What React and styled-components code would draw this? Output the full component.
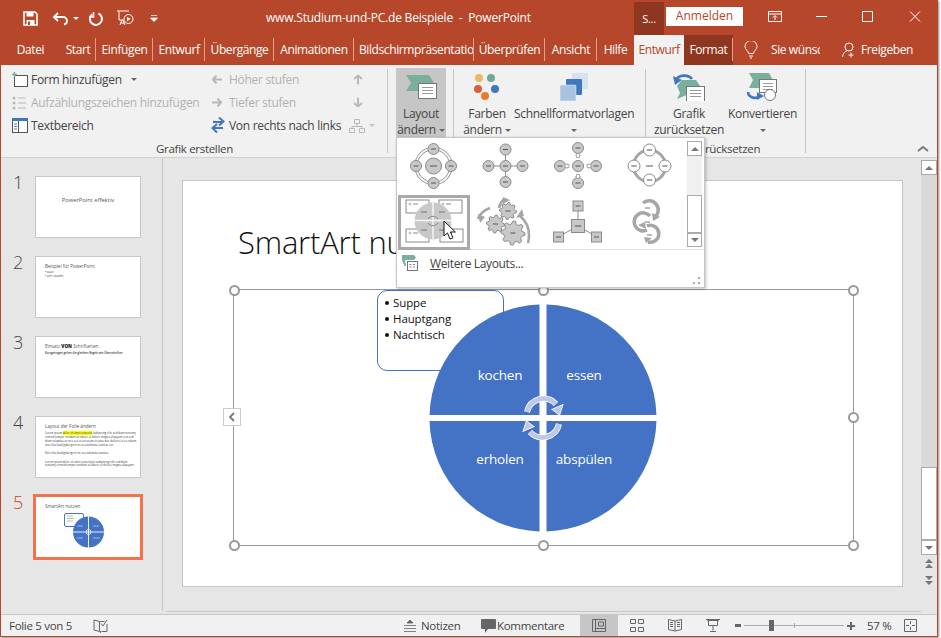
import styled, { createGlobalStyle } from 'styled-components';

const RED = '#B7472A';
const DARK = '#8F3620';
const BLUE = '#4472C4';
const TEAL = '#7AAE9D';
const SEP = '#E5A08C';

const GlobalStyle = createGlobalStyle`
  html, body { margin: 0; padding: 0; background: #fff; }
  * { box-sizing: border-box; }
  body { font-family: "Open Sans", "Noto Sans", "Liberation Sans", sans-serif; font-size: 12px; letter-spacing: -0.3px; color: #444; }
`;

const Screen = styled.div`
  width: 941px;
  height: 638px;
  overflow: hidden;
  background: #fff;
`;

const Window = styled.div`
  position: relative;
  width: 938px;
  height: 637px;
  display: flex;
  flex-direction: column;
  background: #f1f1f1;
  border-left: 1px solid ${RED};
  border-right: 1px solid ${RED};
  border-bottom: 1px solid ${RED};
  box-shadow: 1px 1px 2px rgba(0, 0, 0, 0.45);
`;

/* title bar */
const TitleBar = styled.div`
  height: 35px;
  flex: none;
  display: flex;
  background: ${RED};
  color: #fff;
`;

const Quick = styled.div`
  width: 265px;
  display: flex;
  align-items: center;
  padding: 1px 0 0 22px;
  svg { display: block; flex: none; }
`;

const Title = styled.div`
  width: 368px;
  line-height: 36px;
  white-space: pre;
  font-size: 12px;
  letter-spacing: -0.2px;
`;

const Account = styled.div`
  width: 30px;
  margin-top: 2px;
  background: ${DARK};
  text-align: center;
  line-height: 33px;
  font-size: 11px;
`;

const SignIn = styled.div`
  width: 77px;
  height: 19px;
  margin: 7px 0 0 2px;
  background: #fff;
  color: ${RED};
  text-align: center;
  line-height: 18px;
  letter-spacing: 0;
`;

const WinButtons = styled.div`
  flex: 1;
  display: flex;
  padding: 11px 0 0 25px;
  svg { display: block; }
`;

/* tabs */
const TabBar = styled.div`
  height: 30px;
  flex: none;
  display: flex;
  align-items: stretch;
  background: ${RED};
  color: #fff;
  letter-spacing: -0.4px;
`;

const Tab = styled.div`
  position: relative;
  width: ${(p) => p.$w}px;
  overflow: hidden;
  white-space: nowrap;
  line-height: 29px;
  text-align: ${(p) => (p.$left ? 'left' : 'center')};
  padding-left: ${(p) => (p.$left ? 5 : 0)}px;
  background: ${(p) => (p.$active ? '#f1f1f1' : p.$dark ? DARK : 'transparent')};
  color: ${(p) => (p.$active ? RED : '#fff')};
  &::after {
    content: '';
    display: ${(p) => (p.$sep ? 'block' : 'none')};
    position: absolute;
    right: 0;
    top: 3px;
    height: 23px;
    width: 1px;
    background: ${SEP};
  }
`;

const TabExtra = styled.div`
  display: flex;
  align-items: center;
  padding-bottom: 1px;
  svg { display: block; flex: none; }
`;

const TellMe = styled.div`
  width: 49px;
  margin: 0 22px 0 13px;
  overflow: hidden;
  white-space: nowrap;
`;

const Share = styled.div`
  margin-left: 4px;
`;

/* ribbon */
const Ribbon = styled.div`
  height: 93px;
  flex: none;
  display: flex;
  background: #f1f1f1;
  border-bottom: 1px solid #d2d2d2;
`;

const Group = styled.div`
  position: relative;
  width: ${(p) => p.$w}px;
  display: flex;
  flex-direction: column;
  flex: none;
  &::after {
    content: '';
    position: absolute;
    right: 0;
    top: 4px;
    bottom: 4px;
    width: 1px;
    background: #c6c6c6;
  }
`;

const GroupBody = styled.div`
  height: 72px;
  flex: none;
  display: flex;
  padding-left: ${(p) => p.$pad || 0}px;
`;

const GroupLabel = styled.div`
  height: 17px;
  margin-top: 3px;
  text-align: center;
  line-height: 17px;
  font-size: 11.5px;
  color: #444;
`;

const SmallCol = styled.div`
  width: ${(p) => p.$w}px;
  padding-top: 3px;
`;

const SmallRow = styled.div`
  height: 23px;
  display: flex;
  align-items: center;
  white-space: nowrap;
  color: ${(p) => (p.$off ? '#b1b1b1' : '#444')};
`;

const Slot = styled.span`
  width: ${(p) => p.$w}px;
  margin-left: ${(p) => p.$ml || 0}px;
  flex: none;
  display: flex;
  align-items: center;
  svg { display: block; }
`;

const Caret = styled.span`
  display: inline-block;
  width: 0;
  height: 0;
  margin-left: ${(p) => p.$ml ?? 3}px;
  vertical-align: 2px;
  border-left: 3px solid transparent;
  border-right: 3px solid transparent;
  border-top: 3px solid ${(p) => p.$c || '#666'};
`;

const BigButton = styled.div`
  width: ${(p) => p.$w}px;
  height: 69px;
  margin-top: 3px;
  margin-left: ${(p) => p.$ml || 0}px;
  flex: none;
  background: ${(p) => (p.$on ? '#c6c6c6' : 'transparent')};
  text-align: center;
  line-height: 16px;
  white-space: nowrap;
  color: #444;
`;

const BigIcon = styled.div`
  height: 38px;
  padding-top: ${(p) => p.$top ?? 4}px;
  display: flex;
  justify-content: center;
  svg { display: block; }
`;

const Collapse = styled.svg`
  position: absolute;
  left: 916px;
  top: 145px;
`;

/* main area */
const Main = styled.div`
  flex: 1;
  min-height: 0;
  display: flex;
  background: #e6e6e6;
`;

const ThumbPane = styled.div`
  width: 162px;
  flex: none;
  padding-top: 18px;
  position: relative;
  &::after {
    content: '';
    position: absolute;
    right: 0;
    top: 0;
    bottom: 3px;
    width: 1px;
    background: #c6c6c6;
  }
`;

const ThumbRow = styled.div`
  height: 80px;
  display: flex;
  padding-left: 12px;
`;

const ThumbNum = styled.div`
  width: 22px;
  font-size: 18px;
  font-weight: 300;
  line-height: 12px;
  letter-spacing: 0;
  color: ${(p) => (p.$active ? '#C8472A' : '#444')};
`;

const Thumb = styled.div`
  position: relative;
  width: 106px;
  height: 62px;
  background: #fff;
  border: 1px solid ${(p) => (p.$active ? '#F4734F' : '#c6c6c6')};
  box-shadow: ${(p) => (p.$active ? '0 0 0 2px #F4734F' : 'none')};
  padding: ${(p) => (p.$center ? '20px 0 0' : '6px 9px 0')};
  text-align: ${(p) => (p.$center ? 'center' : 'left')};
  letter-spacing: 0;
  overflow: hidden;
  color: #555;
`;

const ThumbTitle = styled.div`
  font-size: ${(p) => p.$size || 4.6}px;
  line-height: 7px;
  white-space: nowrap;
  b { font-weight: 800; color: #222; }
`;

const ThumbText = styled.div`
  margin-top: ${(p) => p.$mt || 0}px;
  margin-right: ${(p) => p.$mr || 0}px;
  font-size: 2.75px;
  line-height: 3.9px;
  color: #333;
  font-weight: ${(p) => (p.$bold ? 600 : 400)};
  mark { background: #ffff00; color: #333; }
`;

const ThumbArt = styled.svg`
  position: absolute;
  left: 0;
  top: 0;
`;

const EditorCol = styled.div`
  flex: 1;
  display: flex;
  flex-direction: column;
`;

const EditorArea = styled.div`
  flex: 1;
  padding: 22px 0 0 19px;
`;

const HLine = styled.div`
  height: 1px;
  margin: 0 0 2px 3px;
  background: #c6c6c6;
`;

const Slide = styled.div`
  position: relative;
  width: 721px;
  height: 407px;
  background: #fff;
  border: 1px solid #c6c6c6;
  padding: 41px 0 0 55px;
`;

const SlideTitle = styled.h1`
  margin: 0;
  font-size: 31px;
  font-weight: 300;
  line-height: 40px;
  letter-spacing: -0.2px;
  color: #111;
`;

const ArtFrame = styled.div`
  position: relative;
  width: 621px;
  height: 257px;
  margin: 27px 0 0 -5px;
  border: 1px solid #999;
`;

const Handle = styled.span`
  position: absolute;
  left: ${(p) => p.$x}%;
  top: ${(p) => p.$y}%;
  width: 11px;
  height: 11px;
  margin: -5.5px 0 0 -5.5px;
  border: 2px solid #999;
  border-radius: 50%;
  background: #fff;
`;

const PaneToggle = styled.div`
  position: absolute;
  left: -11px;
  top: 118px;
  width: 18px;
  height: 18px;
  background: #fff;
  border: 1px solid #ccc;
  display: flex;
  align-items: center;
  justify-content: center;
`;

const TextPane = styled.ul`
  position: absolute;
  left: 143px;
  top: 0;
  width: 127px;
  height: 81px;
  margin: 0;
  padding: 4px 0 0 15px;
  list-style: none;
  background: #fff;
  border: 1px solid ${BLUE};
  border-radius: 10px;
  color: #111;
  font-size: 11.5px;
  line-height: 16px;
  letter-spacing: -0.1px;
`;

const PaneItem = styled.li`
  position: relative;
  &::before {
    content: '';
    position: absolute;
    left: -8px;
    top: 6px;
    width: 4px;
    height: 4px;
    border-radius: 50%;
    background: #111;
  }
`;

const Cycle = styled.svg`
  position: absolute;
  left: 195px;
  top: 14px;
  overflow: visible;
  text {
    font-family: "Open Sans", "Noto Sans", sans-serif;
    font-size: 13.5px;
    fill: #fff;
    text-anchor: middle;
    letter-spacing: -0.2px;
  }
`;

/* vertical scroll bar */
const VScroll = styled.div`
  width: 16px;
  margin-right: 0;
  padding-top: 2px;
  flex: none;
  display: flex;
  flex-direction: column;
  align-items: stretch;
`;

const ScrollBtn = styled.div`
  height: ${(p) => p.$h || 15}px;
  background: #fff;
  border: 1px solid #ababab;
  display: flex;
  align-items: center;
  justify-content: center;
  flex: none;
`;

const Tri = styled.span`
  width: 0;
  height: 0;
  border-left: 4px solid transparent;
  border-right: 4px solid transparent;
  border-${(p) => (p.$down ? 'top' : 'bottom')}: 4px solid #777;
`;

const ScrollTrack = styled.div`
  height: ${(p) => p.$h}px;
  background: ${(p) => p.$bg || '#d9d9d9'};
  flex: none;
`;

const PageJump = styled.svg`
  display: block;
  margin: ${(p) => p.$mt}px auto 0;
`;

/* status bar */
const StatusBar = styled.div`
  height: 22px;
  flex: none;
  display: flex;
  align-items: center;
  background: #f1f1f1;
  border-top: 1px solid #c6c6c6;
  svg { display: block; flex: none; }
`;

const StatusText = styled.span`
  width: ${(p) => p.$w}px;
  margin-left: ${(p) => p.$ml || 0}px;
  flex: none;
  white-space: nowrap;
  font-size: 11.5px;
  line-height: 18px;
`;

const ViewBtn = styled.div`
  width: 38px;
  height: 21px;
  flex: none;
  display: flex;
  align-items: center;
  justify-content: center;
  background: ${(p) => (p.$on ? '#c6c6c6' : 'transparent')};
`;

const ZoomTrack = styled.div`
  position: relative;
  width: 100px;
  height: 1px;
  margin: 0 3px 0 3px;
  flex: none;
  background: #aaa;
  &::before {
    content: '';
    position: absolute;
    left: 25px;
    top: -5px;
    width: 5px;
    height: 11px;
    background: #666;
  }
  &::after {
    content: '';
    position: absolute;
    left: 50px;
    top: -2px;
    width: 1px;
    height: 5px;
    background: #aaa;
  }
`;

/* layout gallery */
const Gallery = styled.div`
  position: absolute;
  left: 395px;
  top: 137px;
  width: 309px;
  height: 151px;
  z-index: 5;
  background: #fff;
  border: 1px solid #c6c6c6;
  box-shadow: 1px 1px 3px rgba(0, 0, 0, 0.25);
  display: flex;
  flex-direction: column;
`;

const GalleryTop = styled.div`
  height: 112px;
  flex: none;
  display: flex;
  padding-top: 1px;
  border-bottom: 1px solid #e1e1e1;
`;

const GalleryGrid = styled.div`
  width: 289px;
  padding-left: 1px;
  display: grid;
  grid-template-columns: repeat(4, 72px);
  grid-template-rows: 56px 55px;
`;

const GalleryItem = styled.div`
  box-shadow: ${(p) => (p.$on ? 'inset 0 0 0 3px #a9a9a9' : 'none')};
  svg { display: block; }
`;

const GalleryScroll = styled.div`
  width: 15px;
  margin: 2px 0 0 1px;
  display: flex;
  flex-direction: column;
`;

const MoreRow = styled.div`
  flex: 1;
  position: relative;
  display: flex;
  align-items: flex-start;
  padding: 5px 0 0 5px;
  svg { display: block; }
  u { text-decoration: underline; }
`;

const MoreLabel = styled.span`
  margin: 1px 0 0 12px;
  line-height: 15px;
  color: #444;
  letter-spacing: -0.35px;
`;

const Grip = styled.svg`
  position: absolute;
  right: 4px;
  bottom: 3px;
`;

/* icons */
const SaveIcon = () => (
  <svg width="15" height="15" viewBox="0 0 15 15">
    <path d="M1 1h11l2 2v11H1z" fill="none" stroke="#fff" strokeWidth="1.6" />
    <rect x="3.5" y="1" width="7" height="4.5" fill="#fff" />
    <rect x="3.5" y="9" width="8" height="5" fill="#fff" />
    <rect x="5" y="10.5" width="2" height="3.5" fill={RED} />
  </svg>
);

const UndoIcon = () => (
  <svg width="19" height="15" viewBox="0 0 19 15" style={{ marginLeft: 14 }}>
    <path d="M6 2 2 6l4 4M2 6h9a4 4 0 0 1 4 4 4 4 0 0 1-3 3.6" fill="none" stroke="#fff" strokeWidth="1.9" />
  </svg>
);

const RedoIcon = () => (
  <svg width="15" height="15" viewBox="0 0 15 15" style={{ marginLeft: 9 }}>
    <path d="M4.2 3.2A6 6 0 1 0 10.5 2.5" fill="none" stroke="#fff" strokeWidth="2" />
    <path d="M5.5 1v5H1.2" fill="none" stroke="#fff" strokeWidth="1.6" />
  </svg>
);

const PresentIcon = () => (
  <svg width="17" height="16" viewBox="0 0 17 16" style={{ marginLeft: 14 }}>
    <path d="M0 1h12M2 1v9h4M5 10l-2 5M6 10l2 5M3 13h5" fill="none" stroke="#fff" />
    <circle cx="11.5" cy="9" r="4.5" fill={RED} stroke="#fff" />
    <path d="M10 6.8v4.4l3.6-2.2z" fill="#fff" />
  </svg>
);

const QatMore = () => (
  <svg width="8" height="7" viewBox="0 0 8 7" style={{ marginLeft: 16 }}>
    <path d="M1 .5h6M0.5 3h7L4 6.5z" fill="#fff" stroke="#fff" strokeWidth=".8" />
  </svg>
);

const RibbonDisplay = () => (
  <svg width="14" height="11" viewBox="0 0 14 11">
    <path d="M.5.5h13v10H.5zM.5 3h13" fill="none" stroke="#fff" />
    <path d="M7 9V5M5 6.5 7 4.5 9 6.5" fill="none" stroke="#fff" />
  </svg>
);

const Minimize = () => (
  <svg width="11" height="11" viewBox="0 0 11 11" style={{ marginLeft: 34 }}>
    <path d="M0 5.5h11" stroke="#fff" />
  </svg>
);

const Maximize = () => (
  <svg width="11" height="11" viewBox="0 0 11 11" style={{ marginLeft: 35 }}>
    <path d="M.5.5h10v10H.5z" fill="none" stroke="#fff" />
  </svg>
);

const CloseIcon = () => (
  <svg width="12" height="11" viewBox="0 0 12 11" style={{ marginLeft: 36 }}>
    <path d="M1 .5l10 10M11 .5l-10 10" stroke="#fff" />
  </svg>
);

const Bulb = () => (
  <svg width="14" height="18" viewBox="0 0 14 18" style={{ marginLeft: 11 }}>
    <path d="M4.5 12.5c0-2.5-3.5-3.800-3.500-7a6 6 0 0 1 12 0c0 3.200-3.500 4.500-3.500 7zM5 15h4M6 17h2" fill="none" stroke="#fff" />
  </svg>
);

const PersonAdd = () => (
  <svg width="15" height="16" viewBox="0 0 15 16">
    <circle cx="7" cy="5" r="4" fill="none" stroke="#fff" />
    <path d="M.5 15c0-3.500 2.500-5.500 4.500-6.300M9 10.500v5M6.500 13h5" fill="none" stroke="#fff" />
  </svg>
);

const AddShapeIcon = () => (
  <svg width="16" height="15" viewBox="0 0 16 15">
    <rect x="2.500" y="3.500" width="13" height="11" fill="#fff" stroke="#555" />
    <path d="M0 2.500h5M2.500 0v5" stroke={TEAL} strokeWidth="1.600" />
  </svg>
);

const BulletsIcon = () => (
  <svg width="14" height="14" viewBox="0 0 14 14">
    <g fill="#b8b8b8">
      <circle cx="2" cy="2" r="1.500" />
      <circle cx="2" cy="7" r="1.500" />
      <circle cx="2" cy="12" r="1.500" />
      <rect x="6" y="1.500" width="8" height="1" />
      <rect x="6" y="6.500" width="8" height="1" />
      <rect x="6" y="11.500" width="8" height="1" />
    </g>
  </svg>
);

const TextPaneIcon = () => (
  <svg width="16" height="15" viewBox="0 0 16 15">
    <rect x=".5" y=".5" width="15" height="14" fill="#fff" stroke="#555" />
    <rect x="0" y="0" width="16" height="3" fill="#3F78BE" />
    <path d="M6.500 3v11" stroke="#555" />
    <path d="M2 6h3M2 8.500h3M2 11h3" stroke="#3F78BE" />
  </svg>
);

const Arrow = ({ rot }) => (
  <svg width="10" height="9" viewBox="0 0 10 9" style={{ transform: `rotate(${rot}deg)` }}>
    <path d="M4.500.5 1 4.500l3.500 4M1.500 4.500H10" fill="none" stroke="#b8b8b8" strokeWidth="2" />
  </svg>
);

const RtlIcon = () => (
  <svg width="15" height="17" viewBox="0 0 15 17" style={{ marginLeft: -2 }}>
    <path d="M2 6h9M8 1.500l4.500 4L8 9.500" fill="none" stroke="#3F78BE" strokeWidth="2" transform="translate(1 -1)" />
    <path d="M13 11H3M7 7l-4.500 4L7 15.500" fill="none" stroke="#3F78BE" strokeWidth="2" />
  </svg>
);

const OrgIcon = () => (
  <svg width="16" height="14" viewBox="0 0 16 14">
    <path d="M5.500.5h5v4h-5zM.5 9.500h5v4h-5zM10.500 9.500h5v4h-5zM8 4.500v3M3 9.500v-2h10v2" fill="none" stroke="#b8b8b8" />
  </svg>
);

const Doc = ({ x, y, w = 18, h = 15 }) => (
  <g>
    <rect x={x + 0.5} y={y + 0.5} width={w} height={h} fill="#fff" stroke="#777" />
    <path d={`M${x + 4} ${y + 4.500}h${w - 7}M${x + 4} ${y + 7.500}h${w - 7}M${x + 4} ${y + 10.500}h${w - 7}`} stroke="#999" />
  </g>
);

const LayoutIcon = () => (
  <svg width="31" height="25" viewBox="0 0 31 25">
    <path d="M0 1h23l5 8-5 8H0l5-8z" fill={TEAL} />
    <Doc x={12} y={9} />
  </svg>
);

const ColorsIcon = () => (
  <svg width="26" height="28" viewBox="0 0 26 28">
    <circle cx="5" cy="5" r="4" fill="#EDB862" />
    <circle cx="17" cy="5" r="4" fill="#6FA797" />
    <circle cx="1" cy="16" r="4" fill="#DD5B40" transform="translate(3 0)" />
    <circle cx="21" cy="16" r="4" fill="#3F78BE" />
    <circle cx="11" cy="23" r="4" fill="#E87B2D" />
  </svg>
);

const StylesIcon = () => (
  <svg width="28" height="28" viewBox="0 0 28 28">
    <rect x="12" y="0" width="16" height="16" rx="1" fill="#D4E2F1" />
    <rect x="6" y="6" width="16" height="16" rx="1" fill="#3F78BE" />
    <rect x="0" y="12" width="16" height="16" rx="1" fill="#A8C3E0" stroke="#f1f1f1" strokeWidth=".5" />
  </svg>
);

const ResetIcon = () => (
  <svg width="32" height="29" viewBox="0 0 32 29">
    <path d="M4 14 9 8l14 0 4 6-4 5-19 8 3-6z" fill={TEAL} />
    <Doc x={13} y={14} />
    <path d="M3 8A9 7 0 0 1 19 7" fill="none" stroke="#3F78BE" strokeWidth="2.800" />
    <path d="M0 4l2 9 7-5z" fill="#3F78BE" />
  </svg>
);

const ConvertIcon = () => (
  <svg width="31" height="29" viewBox="0 0 31 29">
    <path d="M2 1h20l4 7-4 8H2l4-8z" fill={TEAL} />
    <Doc x={12} y={7} w={17} h={13} />
    <circle cx="23" cy="23" r="5.500" fill="#fff" stroke="#777" />
    <path d="M1 20a7 6 0 0 0 12 4" fill="none" stroke="#3F78BE" strokeWidth="2.600" />
    <path d="M10 20l7 4-7 4z" fill="#3F78BE" />
  </svg>
);

/* gallery diagrams drawn in page coordinates, the viewBox cuts out the cell */
const Node = ({ cx, cy, r = 5.5, fill = '#c8c8c8' }) => (
  <g>
    <circle cx={cx} cy={cy} r={r} fill={fill} stroke="#8a8a8a" />
    <path d={`M${cx - r * 0.45} ${cy}h${r * 0.9}`} stroke="#555" />
  </g>
);

const Square = ({ cx, cy, s = 10 }) => (
  <g>
    <rect x={cx - s / 2} y={cy - s / 2} width={s} height={s} fill="#c8c8c8" stroke="#8a8a8a" />
    <path d={`M${cx - s * 0.25} ${cy}h${s * 0.5}`} stroke="#555" />
  </g>
);

const gearPoints = (cx, cy, r, teeth = 8) => {
  const pts = [];
  for (let i = 0; i < teeth * 4; i += 1) {
    const a = (i / (teeth * 4)) * Math.PI * 2;
    const rr = i % 4 < 2 ? r : r * 0.76;
    pts.push(`${(cx + rr * Math.cos(a)).toFixed(1)},${(cy + rr * Math.sin(a)).toFixed(1)}`);
  }
  return pts.join(' ');
};

const Gear = ({ cx, cy, r }) => (
  <g>
    <polygon points={gearPoints(cx, cy, r)} fill="#c8c8c8" stroke="#8a8a8a" />
    <path d={`M${cx - 2.500} ${cy}h5`} stroke="#555" />
  </g>
);

const Cell = ({ x, y, children }) => (
  <svg width="72" height="55" viewBox={`${x} ${y} 72 55`}>{children}</svg>
);

const Tiny = ({ d }) => <path d={d} fill="#fff" stroke="#8a8a8a" strokeWidth=".7" />;

const Radial1 = () => (
  <Cell x={398} y={139}>
    <circle cx="433.500" cy="166" r="17.500" fill="none" stroke="#9a9a9a" strokeWidth="3.500" />
    <circle cx="433.500" cy="166" r="17.500" fill="none" stroke="#fff" strokeWidth="1.500" />
    <Node cx={433.500} cy={166} r={8} />
    <Node cx={433.500} cy={149} />
    <Node cx={433.500} cy={183} />
    <Node cx={416} cy={166} />
    <Node cx={451} cy={166} />
  </Cell>
);

const Radial2 = () => (
  <Cell x={470} y={139}>
    <path d="M505.500 150v32M489 166h33" stroke="#8a8a8a" />
    <Node cx={505.500} cy={166} />
    <Node cx={505.500} cy={149.500} />
    <Node cx={505.500} cy={182} />
    <Node cx={488.500} cy={166} />
    <Node cx={522.500} cy={166} />
  </Cell>
);

const Radial3 = () => (
  <Cell x={542} y={139}>
    <Node cx={578} cy={166} />
    <Node cx={578} cy={148} />
    <Node cx={578} cy={183} />
    <Node cx={560} cy={166} />
    <Node cx={596} cy={166} />
    <Tiny d="M576.500 157.500v-2h-1l2.500-2.500 2.500 2.500h-1v2zM576.500 174.500v2h-1l2.500 2.500 2.500-2.500h-1v-2zM569 164.500h-2v-1l-2.500 2.500 2.500 2.500v-1h2zM587 164.500h2v-1l2.500 2.500-2.500 2.500v-1h-2z" />
  </Cell>
);

const Radial4 = () => (
  <Cell x={614} y={139}>
    <circle cx="649.500" cy="166" r="16" fill="none" stroke="#a6a6a6" strokeWidth="3" />
    <path d="M646 166h7" stroke="#555" />
    <Node cx={649.500} cy={150} r={6} fill="#fff" />
    <Node cx={649.500} cy={180} r={6} fill="#fff" />
    <Node cx={634} cy={166} r={6} fill="#fff" />
    <Node cx={665} cy={166} r={6} fill="#fff" />
  </Cell>
);

const MiniBox = ({ x, y, w = 23 }) => (
  <g>
    <rect x={x} y={y} width={w} height="13" fill="#fff" stroke="#8a8a8a" />
    <circle cx={x + 4} cy={y + 4} r="1" fill="#fff" stroke="#8a8a8a" strokeWidth=".6" />
    <path d={`M${x + 7} ${y + 4}h5`} stroke="#8a8a8a" />
  </g>
);

const MatrixCycle = () => (
  <Cell x={398} y={195}>
    <MiniBox x={406} y={200} />
    <MiniBox x={439} y={200} />
    <MiniBox x={406} y={229} />
    <MiniBox x={440} y={229} />
    <circle cx="433" cy="221" r="18.500" fill="#c8c8c8" />
    <path d="M433 201v40M414 220.500h38" stroke="#f4f4f4" strokeWidth="1.500" />
    <path d="M428 219a6 6 0 0 1 10 0M438 223a6 6 0 0 1-10 0" fill="none" stroke="#8a8a8a" />
    <path d="M421 212h6M439 212h6M421 230h6M439 230h6" stroke="#777" />
    <path d="M444 221v15l3.500-3 2.500 6 3-1.200-2.600-5.800h5z" fill="#fff" stroke="#000" strokeWidth=".9" />
  </Cell>
);

const Gears = () => (
  <Cell x={470} y={195}>
    <path d="M478 219q3-8 12-11M499 208q1-5 5-9M520 216q12 10 8 27" fill="none" stroke="#a6a6a6" strokeWidth="2.600" />
    <path d="M480 223l-2-9 7 3zM503 197l7 3-7 4zM516 218l8-2-2-7z" fill="#a6a6a6" />
    <Gear cx={508} cy={211} r={8.500} />
    <Gear cx={495.500} cy={224} r={9} />
    <Gear cx={513} cy={233} r={12} />
  </Cell>
);

const Hub = () => (
  <Cell x={542} y={195}>
    <path d="M578 206v20M578 226l-20 11M578 226l19 11" stroke="#8a8a8a" />
    <Square cx={578} cy={206} />
    <Square cx={578} cy={226} s={13} />
    <Square cx={558.500} cy={237} />
    <Square cx={596.500} cy={237} />
  </Cell>
);

const Loops = () => (
  <Cell x={614} y={195}>
    <g fill="none" stroke="#a6a6a6" strokeWidth="3.500">
      <path d="M643 203a8.500 8.500 0 1 1 12 14" />
      <path d="M650 216a9 9 0 1 0-3 14" />
      <path d="M647 226a8.500 8.500 0 1 1 1 16" />
    </g>
    <path d="M652 213l8 4-7 4zM638 225l7-3 1 7zM652 238l-6 5-2-6z" fill="#a6a6a6" />
    <path d="M645 208h5M645 222h5M647 235h5" stroke="#777" />
  </Cell>
);

const MoreIcon = () => (
  <svg width="16" height="16" viewBox="0 0 16 16">
    <path d="M0 0h12l2 2.500-2 2.500H3l1 6H2.500L0 5z" fill={TEAL} />
    <rect x="5.500" y="6.500" width="10" height="9" fill="#fff" stroke="#777" />
    <path d="M7.500 9.500h2M11 9.500h2M7.500 12h2M11 12h2" stroke="#888" />
  </svg>
);

/* the slide's big cycle diagram */
const quarterArcs = (cx, cy, r) => {
  const g1 = 3.5;
  const g2 = 3;
  const dx = Math.sqrt(r * r - g2 * g2);
  const dy = Math.sqrt(r * r - g1 * g1);
  return [
    `M${cx - g1} ${cy - g2}H${cx - dx}A${r} ${r} 0 0 1 ${cx - g1} ${cy - dy}Z`,
    `M${cx + g1} ${cy - g2}V${cy - dy}A${r} ${r} 0 0 1 ${cx + dx} ${cy - g2}Z`,
    `M${cx - g1} ${cy + g2}H${cx - dx}A${r} ${r} 0 0 0 ${cx - g1} ${cy + dy}Z`,
    `M${cx + g1} ${cy + g2}V${cy + dy}A${r} ${r} 0 0 0 ${cx + dx} ${cy + g2}Z`,
  ];
};

const TOP_ARC = 'M98 108A17 17 0 0 1 127 100';
const BOTTOM_ARC = 'M130 120A17 17 0 0 1 101 128';
const ARROW_HEADS = 'M123.500 105.500l10-4.500-3 9.500zM104.500 122.500l-10 4.500 3-9.500z';

const CycleArt = () => (
  <Cycle width="228" height="228" viewBox="0 0 228 228">
    {quarterArcs(114, 114, 113.5).map((d) => <path key={d} d={d} fill={BLUE} />)}
    <g fill="none" stroke="#fff" strokeWidth="6">
      <path d={TOP_ARC} />
      <path d={BOTTOM_ARC} />
    </g>
    <path d={ARROW_HEADS} fill="#fff" stroke="#fff" strokeWidth="1.500" />
    <g fill="none" stroke="#BDC8E5" strokeWidth="4.500">
      <path d={TOP_ARC} />
      <path d={BOTTOM_ARC} />
    </g>
    <path d={ARROW_HEADS} fill="#BDC8E5" />
    <text x="71" y="76">kochen</text>
    <text x="155" y="76">essen</text>
    <text x="71" y="160">erholen</text>
    <text x="155" y="160">abspülen</text>
  </Cycle>
);

const MiniCycle = () => (
  <ThumbArt width="104" height="60" viewBox="0 0 104 60">
    <rect x="28.500" y="16.500" width="19" height="13" rx="1.500" fill="#fff" stroke={BLUE} />
    <path d="M31 19h6M31 21.500h7M31 24h6" stroke="#777" strokeWidth=".5" />
    <circle cx="52.500" cy="35" r="15.500" fill={BLUE} />
    <path d="M52.500 19v32M37 35h31" stroke="#fff" strokeWidth=".9" />
    <circle cx="52.500" cy="35" r="2.500" fill="none" stroke="#dfe5f4" />
    <path d="M41 29h6M57 29h6M41 41h6M57 41h7" stroke="#dfe5f4" strokeWidth=".6" />
  </ThumbArt>
);

const handles = [[0, 0], [50, 0], [100, 0], [0, 50], [100, 50], [0, 100], [50, 100], [100, 100]];

const thumbs = [
  { n: 1, center: true, body: <ThumbTitle $size={5.800}>PowerPoint effektiv</ThumbTitle> },
  {
    n: 2,
    body: (
      <>
        <ThumbTitle>Beispiel für PowerPoint</ThumbTitle>
        <ThumbText $mt={1}>• sauer<br />• sehr einzahn</ThumbText>
      </>
    ),
  },
  {
    n: 3,
    body: (
      <>
        <ThumbTitle>Einsatz <b>VON</b> Schriftarten</ThumbTitle>
        <ThumbText $mt={2} $bold>Kurzgetragen gelten die gleichen Regeln wie Überschriften</ThumbText>
      </>
    ),
  },
  {
    n: 4,
    body: (
      <>
        <ThumbTitle>Layout der Folie ändern</ThumbTitle>
        <ThumbText $mt={2} $mr={-7}>
          Lorem ipsum <mark>dolor sit amet consetet</mark> sadipscing elitr sed diam nonumy eirmod tempor invidunt ut labore et dolore magna aliquyam erat sed diam voluptua at vero eos et accusam et justo duo dolores et ea rebum stet clita kasd gubergren no sea takimata sanctus est.
        </ThumbText>
        <ThumbText $mt={4}>Stet clita kasd gubergren no sea takimata sanctus.</ThumbText>
        <ThumbText $mt={5} $mr={-7}>
          Lorem ipsum dolor sit amet consetetur sadipscing elitr sed diam nonumy eirmod tempor invidunt ut labore et dolore magna aliquyam.
        </ThumbText>
      </>
    ),
  },
  { n: 5, active: true, body: <><ThumbTitle>SmartArt nutzen</ThumbTitle><MiniCycle /></> },
];

export default function App() {
  return (
    <Screen>
      <GlobalStyle />
      <Window>
        <TitleBar>
          <Quick>
            <SaveIcon />
            <UndoIcon />
            <Caret $c="#fff" $ml={2} />
            <RedoIcon />
            <PresentIcon />
            <QatMore />
          </Quick>
          <Title>www.Studium-und-PC.de Beispiele  -  PowerPoint</Title>
          <Account>S...</Account>
          <SignIn>Anmelden</SignIn>
          <WinButtons>
            <RibbonDisplay />
            <Minimize />
            <Maximize />
            <CloseIcon />
          </WinButtons>
        </TitleBar>

        <TabBar>
          <Tab $w={59}>Datei</Tab>
          <Tab $w={36} $sep>Start</Tab>
          <Tab $w={57} $sep>Einfügen</Tab>
          <Tab $w={52} $sep>Entwurf</Tab>
          <Tab $w={69} $sep>Übergänge</Tab>
          <Tab $w={80} $sep>Animationen</Tab>
          <Tab $w={120} $sep $left>Bildschirmpräsentation</Tab>
          <Tab $w={71} $sep>Überprüfen</Tab>
          <Tab $w={52} $sep>Ansicht</Tab>
          <Tab $w={37}>Hilfe</Tab>
          <Tab $w={50} $active>Entwurf</Tab>
          <Tab $w={49} $dark $sep>Format</Tab>
          <TabExtra>
            <Bulb />
            <TellMe>Sie wünschen</TellMe>
            <PersonAdd />
            <Share>Freigeben</Share>
          </TabExtra>
        </TabBar>

        <Ribbon>
          <Group $w={387}>
            <GroupBody $pad={11}>
              <SmallCol $w={200}>
                <SmallRow>
                  <Slot $w={19}><AddShapeIcon /></Slot>
                  Form hinzufügen<Caret $ml={9} />
                </SmallRow>
                <SmallRow $off>
                  <Slot $w={19}><BulletsIcon /></Slot>
                  Aufzählungszeichen hinzufügen
                </SmallRow>
                <SmallRow>
                  <Slot $w={19}><TextPaneIcon /></Slot>
                  Textbereich
                </SmallRow>
              </SmallCol>
              <SmallCol $w={137}>
                <SmallRow $off>
                  <Slot $w={17}><Arrow rot={0} /></Slot>
                  Höher stufen
                </SmallRow>
                <SmallRow $off>
                  <Slot $w={17}><Arrow rot={180} /></Slot>
                  Tiefer stufen
                </SmallRow>
                <SmallRow>
                  <Slot $w={17}><RtlIcon /></Slot>
                  Von rechts nach links
                </SmallRow>
              </SmallCol>
              <SmallCol $w={30}>
                <SmallRow><Slot $w={10} $ml={4}><Arrow rot={90} /></Slot></SmallRow>
                <SmallRow><Slot $w={10} $ml={4}><Arrow rot={270} /></Slot></SmallRow>
                <SmallRow>
                  <Slot $w={16}><OrgIcon /></Slot>
                  <Caret $c="#c4c4c4" $ml={4} />
                </SmallRow>
              </SmallCol>
            </GroupBody>
            <GroupLabel>Grafik erstellen</GroupLabel>
          </Group>

          <Group $w={66}>
            <GroupBody>
              <BigButton $w={50} $ml={8} $on>
                <BigIcon $top={6}><LayoutIcon /></BigIcon>
                Layout<br />ändern<Caret />
              </BigButton>
            </GroupBody>
            <GroupLabel />
          </Group>

          <Group $w={192}>
            <GroupBody>
              <BigButton $w={52} $ml={7}>
                <BigIcon $top={5}><ColorsIcon /></BigIcon>
                Farben<br />ändern<Caret />
              </BigButton>
              <BigButton $w={120} $ml={1}>
                <BigIcon $top={5}><StylesIcon /></BigIcon>
                Schnellformatvorlagen<br /><Caret $ml={0} />
              </BigButton>
            </GroupBody>
            <GroupLabel />
          </Group>

          <Group $w={160}>
            <GroupBody>
              <BigButton $w={86}>
                <BigIcon $top={4}><ResetIcon /></BigIcon>
                Grafik<br />zurücksetzen
              </BigButton>
              <BigButton $w={69} $ml={-4}>
                <BigIcon $top={4}><ConvertIcon /></BigIcon>
                Konvertieren<br /><Caret $ml={0} />
              </BigButton>
            </GroupBody>
            <GroupLabel>Zurücksetzen</GroupLabel>
          </Group>
        </Ribbon>

        <Main>
          <ThumbPane>
            {thumbs.map((t) => (
              <ThumbRow key={t.n}>
                <ThumbNum $active={t.active}>{t.n}</ThumbNum>
                <Thumb $active={t.active} $center={t.center}>{t.body}</Thumb>
              </ThumbRow>
            ))}
          </ThumbPane>

          <EditorCol>
            <EditorArea>
              <Slide>
                <SlideTitle>SmartArt nutzen</SlideTitle>
                <ArtFrame>
                  <TextPane>
                    <PaneItem>Suppe</PaneItem>
                    <PaneItem>Hauptgang</PaneItem>
                    <PaneItem>Nachtisch</PaneItem>
                  </TextPane>
                  <CycleArt />
                  {handles.map(([x, y]) => <Handle key={`${x}-${y}`} $x={x} $y={y} />)}
                  <PaneToggle>
                    <svg width="8" height="10" viewBox="0 0 8 10">
                      <path d="M6 1 2 5l4 4" fill="none" stroke="#777" strokeWidth="1.800" />
                    </svg>
                  </PaneToggle>
                </ArtFrame>
              </Slide>
            </EditorArea>
            <HLine />
          </EditorCol>

          <VScroll>
            <ScrollBtn><Tri /></ScrollBtn>
            <ScrollTrack $h={292} />
            <ScrollBtn $h={73} />
            <ScrollBtn><Tri $down /></ScrollBtn>
            <PageJump $mt={4} width="8" height="9" viewBox="0 0 8 9">
              <path d="M0 4 4 0l4 4zM0 9l4-4 4 4z" fill="#777" />
            </PageJump>
            <PageJump $mt={8} width="8" height="9" viewBox="0 0 8 9">
              <path d="M0 0h8L4 4zM0 5h8L4 9z" fill="#777" />
            </PageJump>
          </VScroll>
        </Main>

        <StatusBar>
          <StatusText $w={84} $ml={8}>Folie 5 von 5</StatusText>
          <svg width="15" height="14" viewBox="0 0 15 14">
            <path d="M6.500 2.500 1 1v10l5.500 1.500zM6.500 2.500h5M8.500 12.500H14V5M7.500 12v2" fill="none" stroke="#666" />
            <path d="M8 4.500l2 2.500 4-6" fill="none" stroke="#666" />
          </svg>
          <svg width="12" height="12" viewBox="0 0 12 12" style={{ marginLeft: 296 }}>
            <path d="M3 3l3-3 3 3zM0 5.500h12M0 8.500h12M0 11.500h12" fill="#666" stroke="#666" strokeWidth=".8" />
          </svg>
          <StatusText $w={60} $ml={5}>Notizen</StatusText>
          <svg width="15" height="14" viewBox="0 0 15 14">
            <path d="M1 0h13a1 1 0 0 1 1 1v8a1 1 0 0 1-1 1H7l-3 4v-4H1a1 1 0 0 1-1-1V1a1 1 0 0 1 1-1z" fill="#666" />
          </svg>
          <StatusText $w={83} $ml={1}>Kommentare</StatusText>
          <ViewBtn $on>
            <svg width="14" height="13" viewBox="0 0 14 13">
              <path d="M.5.5h13v12H.5zM3.500.5v12M3.500 9.500h10M6.500 3h5v4h-5z" fill="none" stroke="#666" />
            </svg>
          </ViewBtn>
          <ViewBtn>
            <svg width="14" height="13" viewBox="0 0 14 13">
              <path d="M.5.500h5v4h-5zM8.500.500h5v4h-5zM.5 8.500h5v4h-5zM8.500 8.500h5v4h-5z" fill="none" stroke="#666" />
            </svg>
          </ViewBtn>
          <ViewBtn>
            <svg width="14" height="13" viewBox="0 0 14 13">
              <path d="M7 2 .5.500v10L7 12l6.500-1.500V.5zM7 2v10M2 3.500h3M2 5.500h3M2 7.500h3M9 3.500h3M9 5.500h3M9 7.500h3" fill="none" stroke="#666" />
            </svg>
          </ViewBtn>
          <ViewBtn>
            <svg width="14" height="13" viewBox="0 0 14 13">
              <path d="M0 .5h14M1.500 .5v1h11v-1M2.500 1.500v5h9v-5M7 6.500v5M4 12.500h6" fill="none" stroke="#666" />
            </svg>
          </ViewBtn>
          <svg width="6" height="3" viewBox="0 0 6 3" style={{ marginLeft: 3 }}>
            <rect width="6" height="3" fill="#666" />
          </svg>
          <ZoomTrack />
          <svg width="8" height="8" viewBox="0 0 8 8">
            <path d="M0 4h8M4 0v8" stroke="#666" strokeWidth="2" />
          </svg>
          <StatusText $w={37} $ml={12}>57 %</StatusText>
          <svg width="13" height="13" viewBox="0 0 13 13">
            <path d="M.5.500h12v12H.5zM6.500 2v3M6.500 8v3M2 6.500h3M8 6.500h3" fill="none" stroke="#666" />
          </svg>
        </StatusBar>

        <Gallery>
          <GalleryTop>
            <GalleryGrid>
              <GalleryItem><Radial1 /></GalleryItem>
              <GalleryItem><Radial2 /></GalleryItem>
              <GalleryItem><Radial3 /></GalleryItem>
              <GalleryItem><Radial4 /></GalleryItem>
              <GalleryItem $on><MatrixCycle /></GalleryItem>
              <GalleryItem><Gears /></GalleryItem>
              <GalleryItem><Hub /></GalleryItem>
              <GalleryItem><Loops /></GalleryItem>
            </GalleryGrid>
            <GalleryScroll>
              <ScrollBtn><Tri /></ScrollBtn>
              <ScrollTrack $h={39} $bg="#f0f0f0" />
              <ScrollBtn $h={38} />
              <ScrollBtn $h={14}><Tri $down /></ScrollBtn>
            </GalleryScroll>
          </GalleryTop>
          <MoreRow>
            <MoreIcon />
            <MoreLabel><u>W</u>eitere Layouts...</MoreLabel>
            <Grip width="7" height="7" viewBox="0 0 7 7">
              <path d="M5 0h2v2H5zM0 5h2v2H0zM5 5h2v2H5z" fill="#aaa" />
            </Grip>
          </MoreRow>
        </Gallery>

        <Collapse width="12" height="8" viewBox="0 0 12 8">
          <path d="M1 6l5-4 5 4" fill="none" stroke="#777" strokeWidth="1.800" />
        </Collapse>
      </Window>
    </Screen>
  );
}
